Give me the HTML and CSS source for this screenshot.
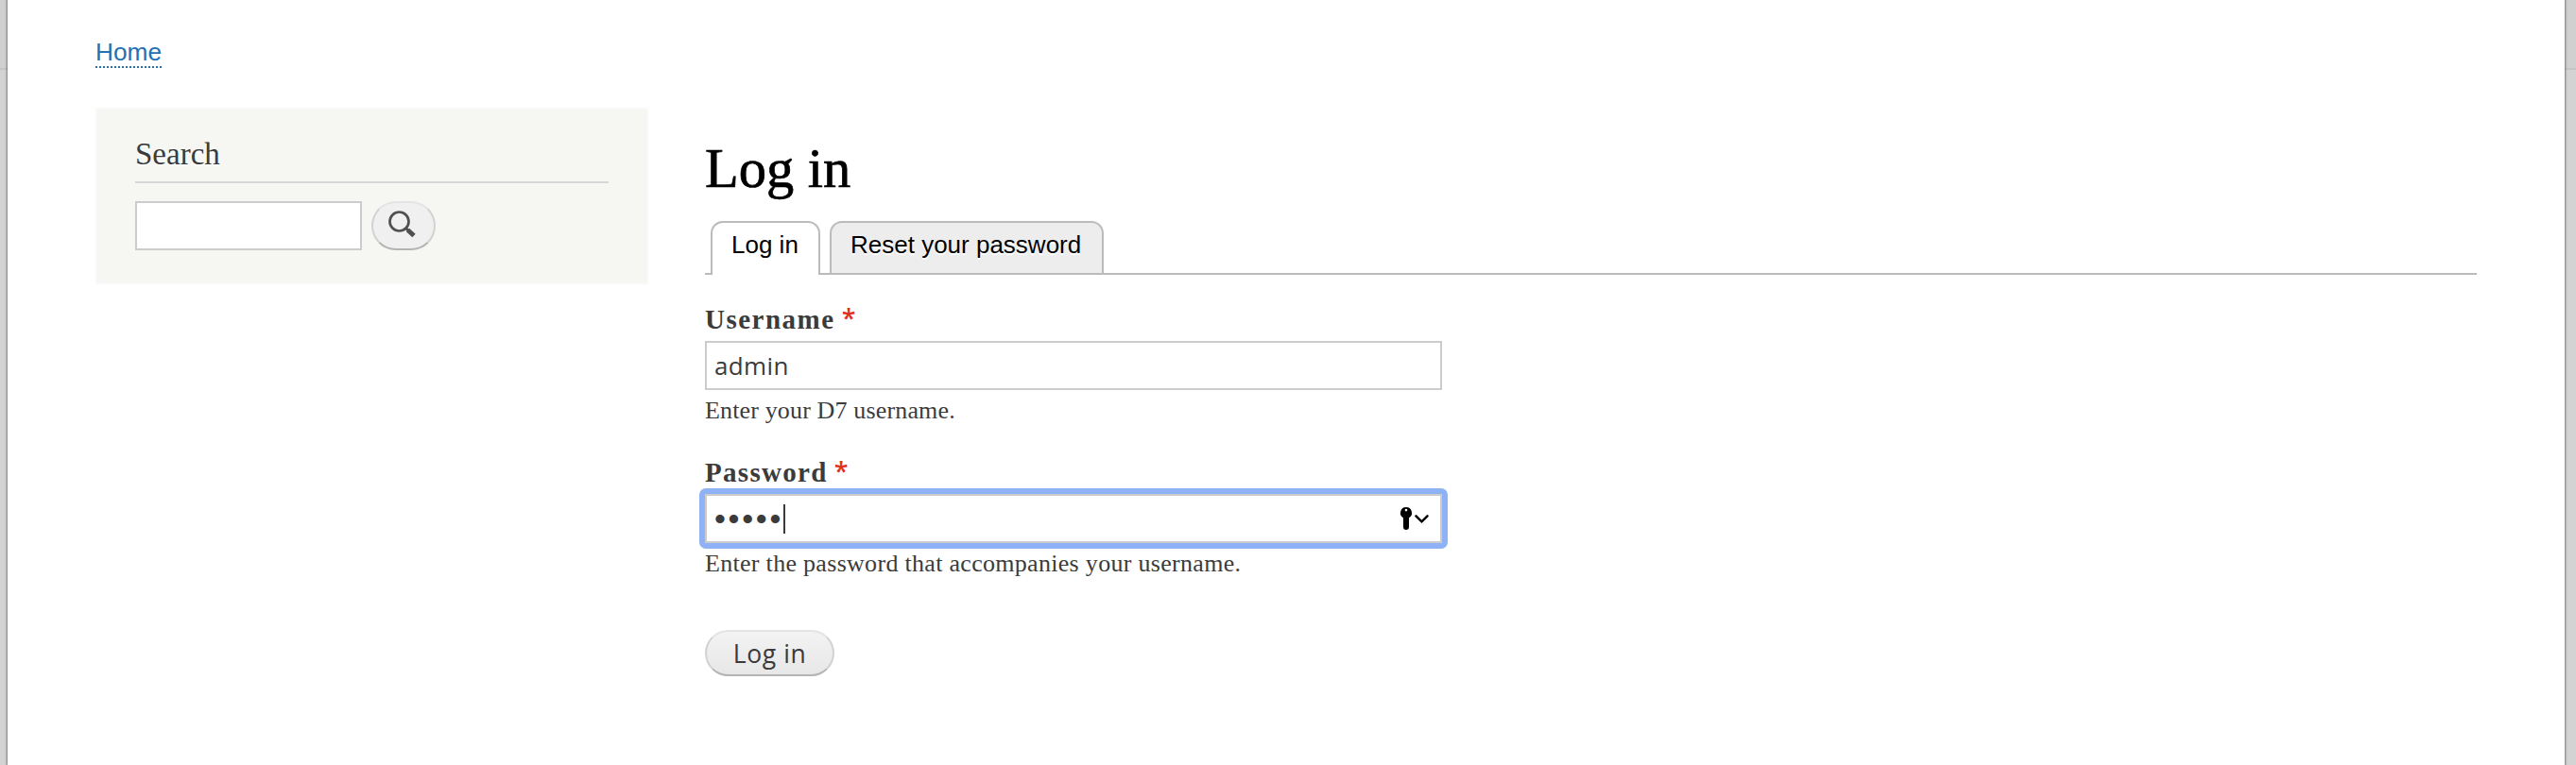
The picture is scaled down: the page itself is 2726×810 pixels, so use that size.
FILE: index.html
```html
<!DOCTYPE html>
<html lang="en">
<head>
<meta charset="utf-8">
<title>Log in</title>
<link rel="stylesheet" href="styles.css">
</head>
<body>
<div class="page">
  <nav class="breadcrumb"><a class="home" href="#">Home</a></nav>
  <div class="columns">
    <aside class="search-block">
      <h2 class="search-title">Search</h2>
      <form class="search-form">
        <input class="field search-field" type="text" aria-label="Search">
        <button class="pill search-button" type="button" aria-label="Search">
          <svg width="32" height="32" viewBox="0 0 32 32" fill="none" stroke="#505050"><circle cx="12.5" cy="12.5" r="10" stroke-width="2.7"/><path d="M19.5 19.5l2.5 2.5" stroke-width="3"/><path d="M21.500 21.500l6.500 6" stroke-width="5" stroke-linecap="butt"/></svg>
        </button>
      </form>
    </aside>
    <main class="content">
      <h1 class="title">Log in</h1>
      <ul class="tabs">
        <li class="tab active">Log in</li>
        <li class="tab">Reset your password</li>
      </ul>
      <form class="login">
        <div class="item">
          <label class="label"><span class="name-label">Username</span><span class="required">*</span></label>
          <div class="field value">admin</div>
          <p class="description user-help">Enter your D7 username.</p>
        </div>
        <div class="item">
          <label class="label"><span class="pass-label">Password</span><span class="required">*</span></label>
          <div class="field value focused">
            <span class="bullets">•••••</span><span class="caret"></span>
            <svg class="key" width="32" height="26" viewBox="0 0 32 26"><path fill="#000" fill-rule="evenodd" d="M7 1a6 6 0 0 1 3 11.2V22a3 3 0 0 1-6 0v-9.800A6 6 0 0 1 7 1zM7 2.800a1.300 1.300 0 1 0 0 2.600 1.300 1.300 0 0 0 0-2.600z"/><path d="M17.500 10.300l6 6 6-6" fill="none" stroke="#000" stroke-width="2.500" stroke-linecap="round"/></svg>
          </div>
          <p class="description pass-help">Enter the password that accompanies your username.</p>
        </div>
        <button class="pill submit" type="button">Log in</button>
      </form>
    </main>
  </div>
</div>
</body>
</html>
```
FILE: styles.css
```css
* { box-sizing: border-box; }
body {
  margin: 0;
  height: 810px;
  overflow: hidden;
  padding: 0 12px 0 8px;
  background: linear-gradient(#d0d0d0 0 72px, #c5c5c5 72px 74px, #d3d3d3 74px);
  color: #3b3b3b;
}
.page {
  height: 810px;
  padding: 40px 93px 0;
  background: #fff;
  box-shadow: 0 0 2px 1px rgba(0, 0, 0, .42);
}
.breadcrumb { height: 74px; }
.home {
  display: inline-block;
  height: 32px;
  border-bottom: 2px dotted #2470b3;
  color: #2470b3;
  font: 26.3px/30px "Liberation Sans", sans-serif;
  text-decoration: none;
}
.columns { display: flex; gap: 60px; align-items: flex-start; }
.search-block {
  width: 585px;
  height: 187px;
  padding: 27px 40px 0;
  border: 2px solid #f9f9f9;
  background: #f6f6f2;
}
.search-title {
  height: 51px;
  margin: 0 0 19px;
  border-bottom: 2px solid #d6d6d6;
  font: 33px/40px "Liberation Serif", serif;
  text-shadow: 0 2px 0 #fff;
}
.search-form { display: flex; gap: 10px; }
.field {
  height: 52px;
  margin: 0;
  border: 2px solid #ccc;
  background: #fff;
}
.search-field { width: 240px; }
.pill {
  padding: 0;
  border: 2px solid;
  border-color: #e4e4e4 #d2d2d2 #b4b4b4;
  border-radius: 26px;
  color: #3a3a3a;
}
.search-button {
  width: 68px;
  height: 52px;
  padding: 0 0 2px 15px;
  background: #f0f0f0;
}
.search-button svg { display: block; }
.content { width: 1875px; }
.title {
  height: 120px;
  margin: 0;
  padding-top: 33px;
  color: #000;
  font: 58.5px/64px "Liberation Serif", serif;
  -webkit-text-stroke: .7px #000;
}
.tabs {
  display: flex;
  gap: 10px;
  height: 57px;
  margin: 0;
  padding: 0 0 0 6px;
  border-bottom: 2px solid #bbb;
  list-style: none;
}
.tab {
  width: 290px;
  height: 55px;
  padding-left: 20px;
  border: 2px solid #bbb;
  border-bottom: 0;
  border-radius: 13px 13px 0 0;
  background: #ededed;
  color: #000;
  font: 26px/47px "Liberation Sans", sans-serif;
  text-shadow: 0 2px 0 #fff;
  white-space: nowrap;
}
.tab.active { width: 116px; height: 57px; background: #fff; }
.login { padding-top: 30px; }
.item { width: 780px; height: 162px; }
.label {
  display: flex;
  gap: 7px;
  height: 40px;
  font: bold 29px/34px "Liberation Serif", serif;
}
.name-label { letter-spacing: 1.5px; }
.pass-label { letter-spacing: 1.300px; }
.required { color: #e0301e; font: 600 27px/32px "Open Sans", sans-serif; }
.value {
  display: flex;
  align-items: center;
  padding-left: 8px;
  font: 26px/48px "Open Sans", sans-serif;
  letter-spacing: .35px;
}
.focused { border-radius: 1px; outline: 6px solid #8fb1f5; }
.bullets { font: 34px/48px "Liberation Sans", sans-serif; letter-spacing: 2.700px; }
.caret { width: 2px; height: 31px; background: #3b3b3b; }
.key { margin: 0 11px 0 auto; }
.description { margin: 0; padding-top: 5px; font: 26px/34px "Liberation Serif", serif; }
.user-help { letter-spacing: .15px; }
.pass-help { letter-spacing: .3px; }
.submit {
  display: block;
  width: 137px;
  height: 49px;
  margin-top: 22px;
  background: linear-gradient(#f3f3f3, #e7e7e7);
  font: 26.5px/44px "Open Sans", sans-serif;
  letter-spacing: .6px;
}
```
